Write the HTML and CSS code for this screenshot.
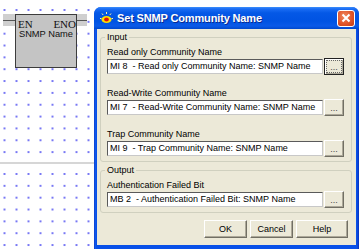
FILE: index.html
```html
<!DOCTYPE html>
<html lang="en">
<head>
    <meta charset="UTF-8">
    <title>Set SNMP Community Name</title>
    <link rel="stylesheet" href="styles.css">
</head>
<body>

<div class="canvas">
    <div class="rung rung-top">
        <div class="wire"></div>
        <div class="block">
            <div class="pins"><span>EN</span><span>ENO</span></div>
            <div class="block-name">SNMP Name</div>
        </div>
    </div>
    <div class="rung"></div>
</div>

<div class="dialog">
    <div class="titlebar">
        <svg class="app-icon" width="13" height="13" viewBox="0 0 13 13">
            <g stroke="#fff6a0" stroke-width="1">
                <line x1="6.5" y1="0" x2="6.5" y2="2"/>
                <line x1="2" y1="1.5" x2="3.2" y2="3"/>
                <line x1="11" y1="1.5" x2="9.8" y2="3"/>
                <line x1="0" y1="6.5" x2="1.5" y2="6.5"/>
                <line x1="11.5" y1="6.5" x2="13" y2="6.5"/>
            </g>
            <ellipse cx="6.5" cy="7.5" rx="5" ry="3.6" fill="#ffe000"/>
            <ellipse cx="6.5" cy="7.5" rx="2.4" ry="2" fill="#e01010"/>
        </svg>
        <span class="title">Set SNMP Community Name</span>
        <div class="close-btn">
            <svg width="10" height="10" viewBox="0 0 10 10">
                <path d="M1.5 1.5 L8.5 8.5 M8.5 1.5 L1.5 8.5" stroke="#fff" stroke-width="2"/>
            </svg>
        </div>
    </div>

    <div class="client">
        <div class="group">
            <div class="legend">Input</div>
            <div class="field">
                <div class="label">Read only Community Name</div>
                <div class="entry">
                    <div class="textbox">MI 8  - Read only Community Name: SNMP Name</div>
                    <button class="browse focused"><span>...</span></button>
                </div>
            </div>
            <div class="field">
                <div class="label">Read-Write Community Name</div>
                <div class="entry">
                    <div class="textbox">MI 7  - Read-Write Community Name: SNMP Name</div>
                    <button class="browse"><span>...</span></button>
                </div>
            </div>
            <div class="field">
                <div class="label">Trap Community Name</div>
                <div class="entry">
                    <div class="textbox">MI 9  - Trap Community Name: SNMP Name</div>
                    <button class="browse"><span>...</span></button>
                </div>
            </div>
        </div>

        <div class="group group-output">
            <div class="legend">Output</div>
            <div class="field">
                <div class="label">Authentication Failed Bit</div>
                <div class="entry">
                    <div class="textbox">MB 2  - Authentication Failed Bit: SNMP Name</div>
                    <button class="browse"><span>...</span></button>
                </div>
            </div>
        </div>

        <div class="actions">
            <button class="push">OK</button>
            <button class="push">Cancel</button>
            <button class="push push-wide">Help</button>
        </div>
    </div>
</div>

</body>
</html>
```

FILE: styles.css
```css
body {
    margin: 0;
    width: 359px;
    height: 249px;
    overflow: hidden;
    display: flex;
    background-color: #fff;
    font-family: 'Liberation Sans', Arial, sans-serif;
}

/* ladder canvas on the left */
.canvas {
    width: 94px;
    height: 249px;
    display: flex;
    flex-direction: column;
}
.rung {
    position: relative;
    flex: 1;
    background-image: radial-gradient(circle at 1px 1px, #7878f4 0.9px, transparent 1.3px);
    background-size: 12px 11.85px;
    background-position: 3.5px 9px;
}
.rung-top {
    flex: none;
    height: 162px;
    border-bottom: 2px solid #d6d6d6;
    background-position: 3.5px 9px;
}
.wire {
    position: absolute;
    left: 3px;
    top: 14px;
    width: 84px;
    height: 12px;
    background: linear-gradient(#cfcfcf 0, #cfcfcf 6px, #555 6px, #555 7px, #cfcfcf 7px);
}
.block {
    position: absolute;
    left: 15px;
    top: 14px;
    width: 60px;
    height: 52px;
    background-color: #c4c4c4;
    border: 1px solid #3c3c3c;
}
.pins {
    display: flex;
    justify-content: space-between;
    margin-top: 4px;
    padding: 0 0 0 2px;
    font-family: 'Liberation Serif', 'Times New Roman', serif;
    font-size: 11px;
    line-height: 10px;
    color: #111;
}
.block-name {
    text-align: center;
    font-size: 9.3px;
    line-height: 11px;
    color: #111;
}

/* dialog window */
.dialog {
    margin-top: 7px;
    width: 265px;
    height: 242px;
    box-sizing: border-box;
    padding: 0 3px 4px 3px;
    border-radius: 7px 7px 0 0;
    background: linear-gradient(90deg, #0a2fb8 0, #1560f0 1px, #0850e8 2px, #0850e8 calc(100% - 2px), #0a2fb8 100%);
    display: flex;
    flex-direction: column;
}
.titlebar {
    height: 22px;
    margin: 0 -3px;
    padding: 0 4px 0 6px;
    border-radius: 7px 7px 0 0;
    background: linear-gradient(#3d8ffb 0, #1a6cf4 2px, #0458e6 6px, #0053e2 14px, #0a5ae8 19px, #0048cc 22px);
    display: flex;
    align-items: center;
    color: #fff;
}
.app-icon {
    margin-right: 4px;
}
.title {
    flex: 1;
    font-size: 11px;
    font-weight: bold;
    letter-spacing: -0.15px;
    text-shadow: 1px 1px 0 #0a2a90;
}
.close-btn {
    width: 16px;
    height: 15px;
    border: 1px solid #fff;
    border-radius: 3px;
    background: radial-gradient(circle at 40% 35%, #f08a60 0, #e0552a 55%, #c23a14 100%);
    display: flex;
    align-items: center;
    justify-content: center;
}
.client {
    flex: 1;
    background-color: #ece9d8;
    padding: 8px 4px 0 3px;
    font-size: 9px;
    color: #000;
}

/* group boxes */
.group {
    border: 1px solid #d0d0bf;
    border-radius: 3px;
    padding: 0 7px 4px 6px;
}
.group-output {
    margin-top: 8px;
}
.legend {
    width: fit-content;
    margin: -6px 0 4px -2px;
    padding: 0 2px;
    background-color: #ece9d8;
    line-height: 11px;
}
.field + .field {
    margin-top: 13px;
}
.label {
    line-height: 11px;
}
.entry {
    display: flex;
    align-items: center;
    height: 17px;
}
.textbox {
    flex: 1;
    height: 13px;
    border: 1px solid;
    border-color: #5a5a5a #c8c8c8 #c8c8c8 #5a5a5a;
    background-color: #fff;
    padding-left: 2px;
    line-height: 13px;
    white-space: pre;
    overflow: hidden;
}

/* buttons */
button {
    font-family: 'Liberation Sans', Arial, sans-serif;
    font-size: 9px;
    color: #000;
    background-color: #ece9d8;
    border: 1px solid;
    border-color: #fff #716f64 #716f64 #fff;
    box-shadow: inset -1px -1px 0 #aca899;
    padding: 0;
    margin: 0;
}
.browse {
    width: 20px;
    height: 17px;
    margin-left: 1px;
    line-height: 12px;
    color: #444;
}
.browse.focused {
    border-color: #222;
    box-shadow: inset 1px 1px 0 #fff, inset -1px -1px 0 #aca899;
}
.browse.focused span {
    display: block;
    margin: 1px;
    border: 1px dotted #666;
    height: 11px;
}
.actions {
    display: flex;
    justify-content: flex-end;
    gap: 3px;
    margin-top: 7px;
    padding-right: 4px;
}
.push {
    width: 43px;
    height: 18px;
}
.push-wide {
    width: 52px;
}
```
